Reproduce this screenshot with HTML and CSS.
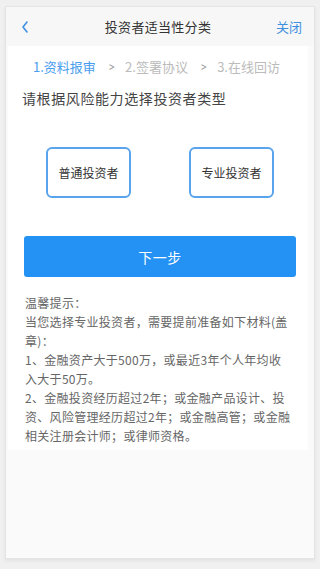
FILE: index.html
```html
<!DOCTYPE html>
<html lang="zh-CN">
<head>
<meta charset="utf-8">
<title>投资者适当性分类</title>
<link rel="stylesheet" href="styles.css">
</head>
<body>
<div class="frame">
  <div class="header">
    <span class="back"><svg width="10" height="14" viewBox="0 0 10 14"><path d="M7 2 L3 7 L7 12" fill="none" stroke="#3d8fe0" stroke-width="1.6" stroke-linecap="round" stroke-linejoin="round"/></svg></span>
    <span class="title">投资者适当性分类</span>
    <span class="close">关闭</span>
  </div>
  <div class="card">
    <div class="steps">
      <span class="step active">1.资料报审</span>
      <span class="arrow">&gt;</span>
      <span class="step">2.签署协议</span>
      <span class="arrow">&gt;</span>
      <span class="step">3.在线回访</span>
    </div>
    <div class="question">请根据风险能力选择投资者类型</div>
    <div class="choices">
      <div class="choice">普通投资者</div>
      <div class="choice">专业投资者</div>
    </div>
    <div class="next">下一步</div>
    <div class="tips">
      <p>温馨提示：</p>
      <p>当您选择专业投资者，需要提前准备如下材料(盖章)：</p>
      <p>1、金融资产大于500万，或最近3年个人年均收入大于50万。</p>
      <p>2、金融投资经历超过2年；或金融产品设计、投资、风险管理经历超过2年；或金融高管；或金融相关注册会计师；或律师资格。</p>
    </div>
  </div>
</div>
</body>
</html>
```
FILE: styles.css
```css
* { box-sizing: border-box; }
html, body { margin: 0; padding: 0; }
body {
  background: #f0f0f0;
  font-family: "Noto Sans CJK SC", "Noto Sans", sans-serif;
  width: 320px;
  height: 569px;
  overflow: hidden;
}
.frame {
  margin: 6px 5px 0 5px;
  width: 310px;
  height: 553px;
  border: 1px solid #e4e4e4;
  background: #fafafa;
  box-shadow: 0 2px 4px rgba(0,0,0,0.06);
}
.header {
  height: 39px;
  background: #f7f7f7;
  display: flex;
  align-items: center;
  justify-content: space-between;
  padding: 0 12px 0 14px;
}
.back { display: flex; align-items: center; width: 20px; }
.title {
  font-size: 13px;
  color: #333;
  letter-spacing: 0.3px;
}
.close {
  font-size: 13px;
  color: #3d8fe0;
}
.card {
  margin: 0 6px 0 2px;
  background: #fff;
  padding-bottom: 5px;
}
.steps {
  padding-top: 11px;
  height: 31px;
  display: flex;
  align-items: center;
  padding-left: 25px;
  font-size: 13px;
  line-height: 20px;
  color: #bbb;
}
.step { white-space: nowrap; }
.step.active { color: #4a9ef0; }
.arrow {
  color: #999;
  font-size: 13px;
  margin: 0 10px 0 12px;
  transform: scaleX(0.75);
}
.question {
  margin-top: 11px;
  padding-left: 14px;
  font-size: 14px;
  line-height: 20px;
  color: #444;
  letter-spacing: 0.6px;
}
.choices {
  margin-top: 39px;
  display: flex;
  padding-left: 38px;
  gap: 58px;
}
.choice {
  width: 85px;
  height: 51px;
  border: 2px solid #5aa4ee;
  border-radius: 6px;
  display: flex;
  align-items: center;
  justify-content: center;
  font-size: 12px;
  color: #333;
}
.next {
  margin: 38px 12px 0 16px;
  height: 41px;
  background: #2491f5;
  border-radius: 3px;
  color: #fff;
  font-size: 14px;
  display: flex;
  align-items: center;
  justify-content: center;
  letter-spacing: 0.5px;
}
.tips {
  margin-top: 16px;
  padding: 0 17px 0 17px;
  font-size: 12px;
  line-height: 19px;
  color: #666;
  letter-spacing: 0.3px;
}
.tips p { margin: 0; }
```
